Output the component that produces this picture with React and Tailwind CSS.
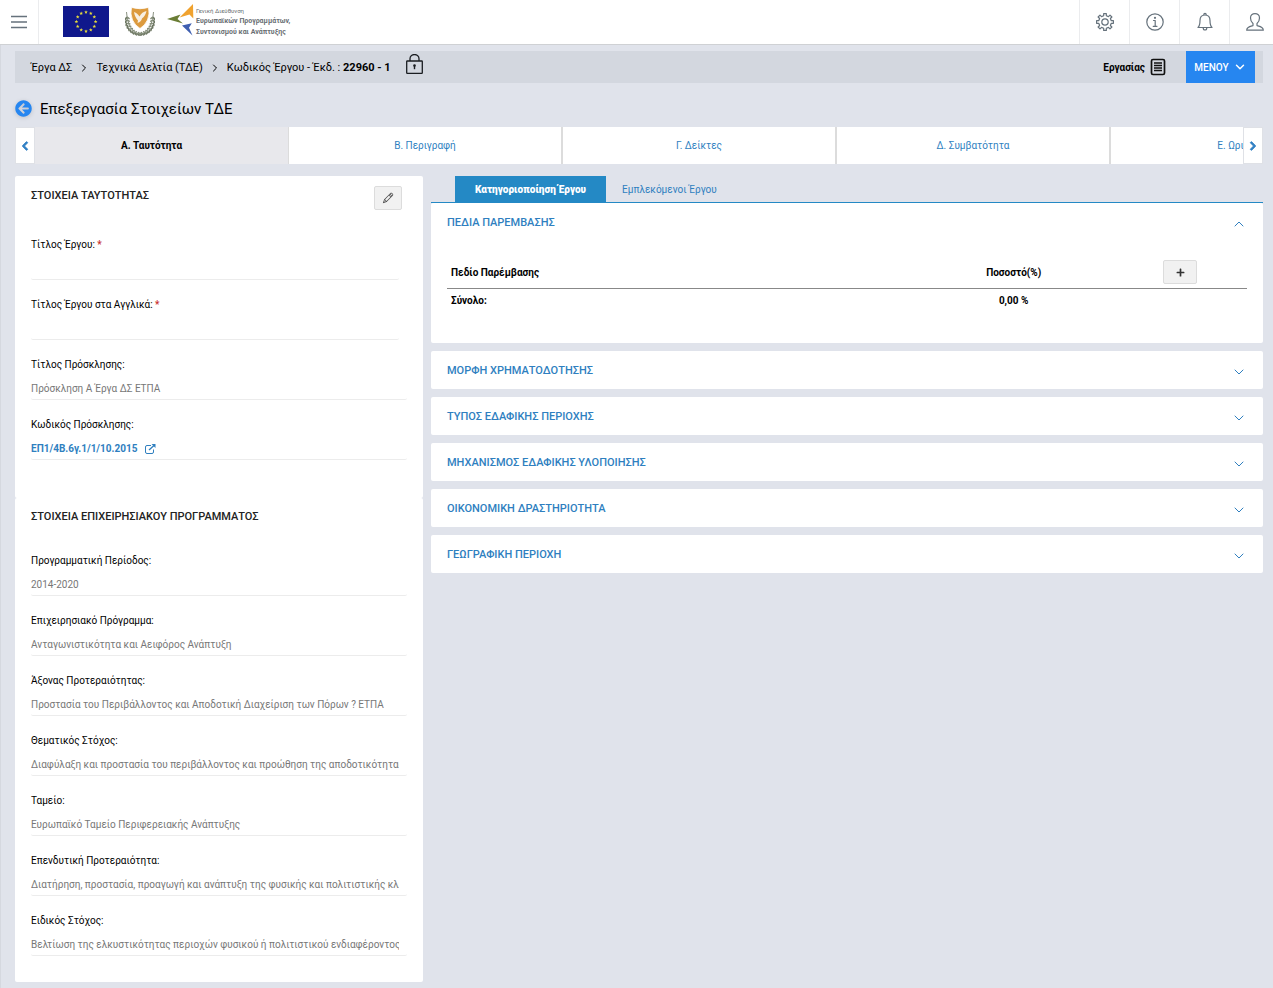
import { FaArrowCircleLeft, FaChevronLeft, FaChevronRight, FaPlus } from "react-icons/fa";
import { TfiPencil } from "react-icons/tfi";
import { ChevronDown, ChevronUp, ChevronRight } from "lucide-react";

const identityFields = [
  { id: "title", label: "Τίτλος Έργου:", required: true, value: "" },
  { id: "title-en", label: "Τίτλος Έργου στα Αγγλικά:", required: true, value: "" },
  { id: "call-title", label: "Τίτλος Πρόσκλησης:", value: "Πρόσκληση Α Έργα ΔΣ ΕΤΠΑ" },
];

const programmeFields = [
  { id: "period", label: "Προγραμματική Περίοδος:", value: "2014-2020" },
  { id: "programme", label: "Επιχειρησιακό Πρόγραμμα:", value: "Ανταγωνιστικότητα και Αειφόρος Ανάπτυξη" },
  { id: "axis", label: "Άξονας Προτεραιότητας:", value: "Προστασία του Περιβάλλοντος και Αποδοτική Διαχείριση των Πόρων ? ΕΤΠΑ" },
  { id: "theme", label: "Θεματικός Στόχος:", value: "Διαφύλαξη και προστασία του περιβάλλοντος και προώθηση της αποδοτικότητας των πόρων" },
  { id: "fund", label: "Ταμείο:", value: "Ευρωπαϊκό Ταμείο Περιφερειακής Ανάπτυξης" },
  { id: "priority", label: "Επενδυτική Προτεραιότητα:", value: "Διατήρηση, προστασία, προαγωγή και ανάπτυξη της φυσικής και πολιτιστικής κληρονομιάς" },
  { id: "goal", label: "Ειδικός Στόχος:", value: "Βελτίωση της ελκυστικότητας περιοχών φυσικού ή πολιτιστικού ενδιαφέροντος" },
];

const tabs = ["Α. Ταυτότητα", "Β. Περιγραφή", "Γ. Δείκτες", "Δ. Συμβατότητα", "Ε. Ωριμότητα"];

const sections = [
  "ΜΟΡΦΗ ΧΡΗΜΑΤΟΔΟΤΗΣΗΣ",
  "ΤΥΠΟΣ ΕΔΑΦΙΚΗΣ ΠΕΡΙΟΧΗΣ",
  "ΜΗΧΑΝΙΣΜΟΣ ΕΔΑΦΙΚΗΣ ΥΛΟΠΟΙΗΣΗΣ",
  "ΟΙΚΟΝΟΜΙΚΗ ΔΡΑΣΤΗΡΙΟΤΗΤΑ",
  "ΓΕΩΓΡΑΦΙΚΗ ΠΕΡΙΟΧΗ",
];

function polar(r, deg) {
  const a = (deg * Math.PI) / 180;
  return [r * Math.sin(a), -r * Math.cos(a)];
}

const gearPath =
  "M" +
  Array.from({ length: 8 }, (_, i) => {
    const c = i * 45;
    return [polar(6.4, c - 12), polar(8.5, c - 9), polar(8.5, c + 9), polar(6.4, c + 12)]
      .map(([x, y]) => `${x.toFixed(2)} ${y.toFixed(2)}`)
      .join("L");
  }).join("L") +
  "Z";

function starPoints(cx, cy, r) {
  return Array.from({ length: 10 }, (_, i) => {
    const [x, y] = polar(i % 2 ? r * 0.45 : r, i * 36);
    return `${(cx + x).toFixed(2)},${(cy + y).toFixed(2)}`;
  }).join(" ");
}

function EuFlag() {
  return (
    <svg width="46" height="31" viewBox="0 0 46 31" role="img" aria-label="Ευρωπαϊκή Ένωση">
      <rect width="46" height="31" fill="#10188c" />
      {Array.from({ length: 12 }, (_, i) => {
        const [x, y] = polar(9.6, i * 30);
        return <polygon key={i} points={starPoints(23 + x, 15.7 + y, 1.9)} fill="#e6dc3c" />;
      })}
    </svg>
  );
}

function CyprusEmblem() {
  const leaves = Array.from({ length: 9 }, (_, i) => {
    const t = 184 + i * 11.5;
    const [x, y] = polar(1, t);
    return { x: 15 + x * 13.2, y: 14 + y * 14.5, t };
  });
  return (
    <svg width="30" height="31" viewBox="0 0 30 31" role="img" aria-label="Κυπριακή Δημοκρατία">
      {[1, -1].map((s) => (
        <g key={s} transform={s === 1 ? undefined : "translate(30 0) scale(-1 1)"}>
          <path d="M16 29C8 27 2.500 20 1.500 6" fill="none" stroke="#8a9282" strokeWidth="1" />
          {leaves.map((l, i) => (
            <g key={i}>
              <ellipse cx={l.x - 1} cy={l.y} rx="2.100" ry="0.900" transform={`rotate(${l.t - 150} ${l.x - 1} ${l.y})`} fill="#6d7763" />
              <ellipse cx={l.x + 1.4} cy={l.y - 0.6} rx="1.900" ry="0.800" transform={`rotate(${l.t - 240} ${l.x + 1.4} ${l.y - 0.6})`} fill="#848d79" />
            </g>
          ))}
        </g>
      ))}
      <path d="M6.500 1.500Q15 4 23.500 1.500Q25 8 22.500 14Q20 19.500 15 22.500Q10 19.500 7.500 14Q5 8 6.500 1.500Z" fill="#dc9a3e" stroke="#fff" strokeWidth="0.800" />
      <path d="M9 6C11.500 6.500 13 8.500 14.500 10.500C16 7.500 18.500 5.500 21.500 5C20.800 8 19.500 11 17 12.500C16.500 14.500 15 16 12.500 17L13 14.500C11 12.500 9.500 9.500 9 6Z" fill="#f8efe2" />
    </svg>
  );
}

function DirectorateLogo() {
  return (
    <svg width="130" height="36" viewBox="0 0 130 36" role="img" aria-label="Γενική Διεύθυνση Ευρωπαϊκών Προγραμμάτων">
      <path d="M26 1L26.300 15.500L22.500 11.500L12.500 14.500Z" fill="#f0a22e" />
      <path d="M0 16L13.500 11.500L10.500 16L16 20.500Z" fill="#6a7d35" />
      <path d="M15 22.500L24.800 20.300L22 24.800L25.500 32.500Z" fill="#3f5fb0" />
      <g fontFamily="Roboto, sans-serif" fill="#6a6f74">
        <text x="29" y="10" fontSize="6">Γενική Διεύθυνση</text>
        <text x="29" y="20" fontSize="7" fontWeight="700">Ευρωπαϊκών Προγραμμάτων,</text>
        <text x="29" y="31" fontSize="7" fontWeight="700">Συντονισμού και Ανάπτυξης</text>
      </g>
    </svg>
  );
}

function TopIcon({ label, last, children }) {
  return (
    <button
      type="button"
      aria-label={label}
      className={
        last
          ? "flex h-11 w-11 items-center border-l border-[#ebecee] pl-[15px] text-[#66727c]"
          : "flex h-11 w-[50px] items-center border-l border-[#ebecee] pl-[15px] text-[#66727c]"
      }
    >
      <svg className="shrink-0" width="20" height="20" viewBox="-10 -10 20 20" fill="none" stroke="currentColor" strokeWidth="1.200" strokeLinecap="round" strokeLinejoin="round">
        {children}
      </svg>
    </button>
  );
}

function Lock() {
  return (
    <svg width="17" height="20" viewBox="0 0 17 20" fill="none" stroke="#1a1d21" strokeWidth="1.300" aria-label="Κλειδωμένο" role="img">
      <rect x="0.700" y="7" width="15.600" height="12.300" rx="0.600" />
      <path d="M4 7V4.700A4.500 4.200 0 0 1 13 4.700V7" />
      <circle cx="8.500" cy="11.600" r="1.300" fill="#1a1d21" stroke="none" />
      <path d="M8.500 12V15.200" strokeWidth="1.400" />
    </svg>
  );
}

function ExternalIcon() {
  return (
    <svg width="11" height="10" viewBox="0 0 11 10" fill="none" stroke="currentColor" strokeWidth="1" aria-hidden="true">
      <path d="M6 1.500H2Q0.500 1.500 0.500 3V8Q0.500 9.500 2 9.500H7Q8.500 9.500 8.500 8V5.500" />
      <path d="M4 6L9 1.500" strokeWidth="1.300" />
      <path d="M6.500 0H10.500V4Z" fill="currentColor" stroke="none" />
    </svg>
  );
}

function Field({ field }) {
  return (
    <div className="mb-4">
      <label htmlFor={field.id} className="mb-0.5 block text-[10px] leading-[18px] text-black">
        {field.label}
        {field.required && <span className="font-medium text-[#c9302c]"> *</span>}
      </label>
      <div className={field.required ? "pr-2" : ""}>
        <input
          id={field.id}
          defaultValue={field.value}
          readOnly={!field.required}
          className="block h-6 w-full rounded-xs border-b border-[#ececec] bg-transparent pt-0.5 pr-2 text-[10px] text-[#777] outline-none"
        />
      </div>
    </div>
  );
}

export default function App() {
  return (
    <div className="min-h-screen border-l border-[#d5d8df] bg-[#e0e3eb] font-[Roboto,'Noto_Sans',sans-serif] text-[10px] text-black">
      <header className="-ml-px flex h-[45px] items-start justify-between border-b border-[#cfd1d4] bg-white">
        <div className="flex h-11 items-center">
          <button type="button" aria-label="Πλοήγηση" className="flex h-11 w-[39px] items-center border-r border-[#ebecee] pl-[11px]">
            <svg width="16" height="14" viewBox="0 0 16 14" stroke="#66727c" strokeWidth="1.300" aria-hidden="true">
              <path d="M0 1.500H16M0 7H16M0 12.500H16" />
            </svg>
          </button>
          <div className="flex items-center pb-0.5 pl-6">
            <EuFlag />
            <div className="pl-4">
              <CyprusEmblem />
            </div>
            <div className="pl-3">
              <DirectorateLogo />
            </div>
          </div>
        </div>
        <div className="flex">
          <TopIcon label="Ρυθμίσεις">
            <path d={gearPath} />
            <circle r="3.200" />
          </TopIcon>
          <TopIcon label="Πληροφορίες">
            <circle r="8.200" />
            <path d="M-1.500 -1.500H0.200V4.200M-1.800 4.300H2" />
            <circle cy="-4.200" r="0.500" fill="currentColor" />
          </TopIcon>
          <TopIcon label="Ειδοποιήσεις">
            <path d="M-7 5.500C-5 3.500 -5 1.500 -5 -1.500C-5 -5 -3 -7 0 -7S5 -5 5 -1.500C5 1.500 5 3.500 7 5.500Z" />
            <path d="M-1.200 -7.200Q-1.200 -8.600 0 -8.600T1.200 -7.200M-1.800 5.700Q-1.800 8 0 8T1.800 5.700" />
          </TopIcon>
          <TopIcon label="Χρήστης" last>
            <path d="M-2 1.500C-3.800 0 -4.500 -1.800 -4.500 -4C-4.500 -6.800 -2.600 -8.300 0 -8.300S4.500 -6.800 4.500 -4C4.500 -1.800 3.800 0 2 1.500V3.600C4.500 4.300 8.300 4.800 8.300 8.200H-8.300C-8.300 4.800 -4.500 4.300 -2 3.600Z" />
          </TopIcon>
        </div>
      </header>

      <main className="pr-[10px] pl-[14px]">
        <div className="mt-1.5 flex h-8 items-center justify-between bg-[#d3d7df] pr-2 pl-4">
          <nav aria-label="Διαδρομή" className="flex items-center pt-0.5 text-[11px]">
            <a href="#projects">Έργα ΔΣ</a>
            <ChevronRight className="mx-1.5 size-3" strokeWidth={2} />
            <a href="#sheets">Τεχνικά Δελτία (ΤΔΕ)</a>
            <ChevronRight className="mx-1.5 size-3" strokeWidth={2} />
            <span>
              Κωδικός Έργου - Έκδ. : <b className="font-bold">22960 - 1</b>
            </span>
            <span className="pb-2 pl-[15px]">
              <Lock />
            </span>
          </nav>
          <div className="flex items-center">
            <button type="button" className="flex items-center gap-[5px] font-bold">
              Εργασίας
              <svg width="16" height="18" viewBox="0 0 16 18" fill="none" stroke="#111" aria-hidden="true">
                <rect x="1.500" y="1.500" width="13" height="15" rx="1.500" strokeWidth="1.700" />
                <path d="M4 5H12M4 7.500H12M4 10H12M4 12.500H12" strokeWidth="1.300" />
              </svg>
            </button>
            <button type="button" className="ml-5 flex h-8 w-[69px] items-center justify-center gap-1 bg-[#2686f0] font-medium text-white">
              ΜΕΝΟΥ
              <ChevronDown className="size-3.5" strokeWidth={2.500} />
            </button>
          </div>
        </div>

        <div className="mt-[11px] flex h-7 items-center gap-2">
          <a href="#back" aria-label="Πίσω" className="text-[#2686f0] drop-shadow-sm">
            <FaArrowCircleLeft className="size-[17px]" />
          </a>
          <h1 className="pt-0.5 text-[15px]">Επεξεργασία Στοιχείων ΤΔΕ</h1>
        </div>

        <div className="relative mt-[5px] h-[37px]">
          <div role="tablist" className="flex h-full overflow-hidden">
            {tabs.map((tab, i) => (
              <button
                key={tab}
                type="button"
                role="tab"
                aria-selected={i === 0}
                className={
                  i === 0
                    ? "h-full w-[274px] shrink-0 border-r border-[#dcdcdc] bg-[#e8e8ec] font-bold"
                    : "h-full w-[274px] shrink-0 border-r-2 border-[#dcdcdc] bg-white text-[#2f7fbf]"
                }
              >
                {tab}
              </button>
            ))}
          </div>
          <button type="button" aria-label="Προηγούμενες καρτέλες" className="absolute inset-y-0 left-0 flex w-5 items-center justify-center border border-[#dfe1e6] bg-white text-[#2f7fc4]">
            <FaChevronLeft className="size-2.5" stroke="currentColor" strokeWidth={50} />
          </button>
          <button type="button" aria-label="Επόμενες καρτέλες" className="absolute inset-y-0 right-0 flex w-5 items-center justify-center border border-[#dfe1e6] bg-white text-[#2f7fc4]">
            <FaChevronRight className="size-2.5" stroke="currentColor" strokeWidth={50} />
          </button>
        </div>

        <div className="mt-3 flex items-start gap-2 pb-[5px]">
          <div className="min-w-0 flex-[408]">
            <section className="rounded-xs bg-white px-4 pt-2.5 pb-[22px]">
              <div className="mb-[26px] flex items-start justify-between pr-[5px]">
                <h2 className="text-[11px] leading-5 font-medium text-[#222]">ΣΤΟΙΧΕΙΑ ΤΑΥΤΟΤΗΤΑΣ</h2>
                <button type="button" aria-label="Επεξεργασία" className="flex h-6 w-7 items-center justify-center rounded-xs border border-[#dcdcdc] bg-[#f1f1f1] text-[#444]">
                  <TfiPencil className="size-3" />
                </button>
              </div>
              {identityFields.map((f) => (
                <Field key={f.id} field={f} />
              ))}
              <div className="mb-4">
                <div className="mb-0.5 leading-[18px]">Κωδικός Πρόσκλησης:</div>
                <div className="flex h-6 items-center rounded-xs border-b border-[#ececec] pt-0.5">
                  <a href="#call" className="flex items-center gap-2 font-bold text-[#2f7fbf]">
                    ΕΠ1/4Β.6γ.1/1/10.2015
                    <ExternalIcon />
                  </a>
                </div>
              </div>
            </section>
            <section className="rounded-xs bg-white px-4 pt-[10px] pb-[10px]">
              <h2 className="mb-[26px] text-[11px] leading-[18px] font-medium text-[#222]">ΣΤΟΙΧΕΙΑ ΕΠΙΧΕΙΡΗΣΙΑΚΟΥ ΠΡΟΓΡΑΜΜΑΤΟΣ</h2>
              {programmeFields.map((f) => (
                <Field key={f.id} field={f} />
              ))}
            </section>
          </div>

          <div className="min-w-0 flex-[832]">
            <div role="tablist" className="flex h-[27px] border-b border-[#2489c5] pl-6">
              <button type="button" role="tab" aria-selected="true" className="bg-[#2489c5] px-5 font-black text-white">
                Κατηγοριοποίηση Έργου
              </button>
              <button type="button" role="tab" aria-selected="false" className="px-4 text-[#2f7fbf]">
                Εμπλεκόμενοι Έργου
              </button>
            </div>
            <div className="flex flex-col gap-2">
              <section className="rounded-xs bg-white px-4 pb-[31px]">
                <h2>
                  <button type="button" aria-expanded="true" className="flex h-[38px] w-full items-center justify-between text-[11px] font-medium text-[#2f7fbf]">
                    <span className="pt-0.5">ΠΕΔΙΑ ΠΑΡΕΜΒΑΣΗΣ</span>
                    <ChevronUp className="mt-1 size-4" strokeWidth={1.500} />
                  </button>
                </h2>
                <table className="mt-4 w-full table-fixed">
                  <thead>
                    <tr className="h-[31px] border-b border-[#888]">
                      <th scope="col" className="w-7/12 pl-1 text-left font-bold">Πεδίο Παρέμβασης</th>
                      <th scope="col" className="w-3/12 font-bold">Ποσοστό(%)</th>
                      <th scope="col" className="w-2/12">
                        <button type="button" aria-label="Προσθήκη" className="inline-flex h-6 w-[34px] items-center justify-center rounded-xs border border-[#dcdcdc] bg-[#f1f1f1] align-middle text-[#333]">
                          <FaPlus className="size-[9px]" />
                        </button>
                      </th>
                    </tr>
                  </thead>
                  <tbody>
                    <tr className="h-6 font-bold">
                      <td className="pl-1">Σύνολο:</td>
                      <td className="text-center">0,00 %</td>
                      <td></td>
                    </tr>
                  </tbody>
                </table>
              </section>
              {sections.map((name) => (
                <section key={name} className="rounded-xs bg-white px-4">
                  <h2>
                    <button type="button" aria-expanded="false" className="flex h-[38px] w-full items-center justify-between text-[11px] font-medium text-[#2f7fbf]">
                      <span className="pt-0.5">{name}</span>
                      <ChevronDown className="mt-1 size-4" strokeWidth={1.500} />
                    </button>
                  </h2>
                </section>
              ))}
            </div>
          </div>
        </div>
      </main>
    </div>
  );
}
